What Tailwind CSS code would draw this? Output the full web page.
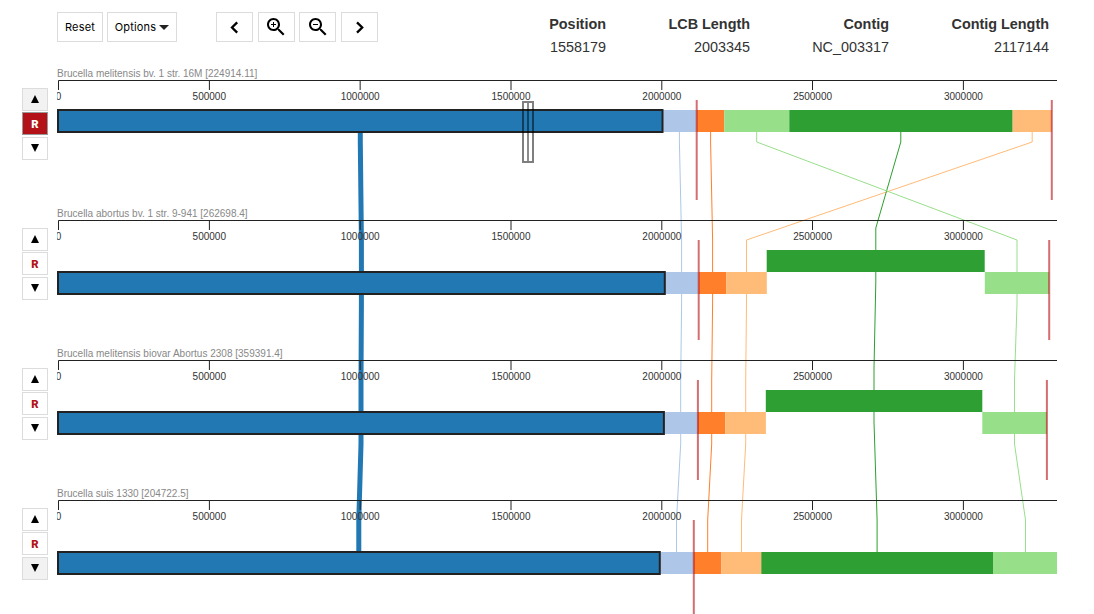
<!DOCTYPE html>
<html lang="en">
<head>
<meta charset="utf-8">
<title>Genome alignment viewer</title>
<script src="https://cdn.jsdelivr.net/npm/@tailwindcss/browser@4"></script>
</head>
<body class="bg-white w-[1094px] h-[614px] overflow-hidden font-['Inter',sans-serif] text-black">
<header class="flex h-[66px] pl-[57px] pr-[45px] justify-between">
  <div class="flex pt-3 h-[42px] text-[11px]">
    <button class="w-[46px] border border-[#dcdcdc] pt-px tracking-[0.15px]">Reset</button>
    <button class="ml-1 w-[70px] border border-[#dcdcdc] pt-px flex items-center justify-center gap-[3px] tracking-[0.15px]">Options
      <svg class="w-[10px] h-[5px]" viewBox="0 0 10 5"><path d="M0 0H10L5 5Z" fill="#222"/></svg></button>
    <button class="ml-[39px] w-[37px] border border-[#dcdcdc] flex items-center justify-center" aria-label="Left"><svg width="24" height="24" viewBox="0 0 24 24"><path d="M14.2 7.4L9 12.5L14.2 17.6" fill="none" stroke="#000" stroke-width="2.3"/></svg></button>
    <button class="ml-[5px] w-[37px] pr-px border border-[#dcdcdc] flex items-center justify-center" aria-label="Zoom in"><svg width="24" height="24" viewBox="0 0 24 24"><path d="M15.5 14h-.79l-.28-.27C15.41 12.59 16 11.11 16 9.5 16 5.91 13.09 3 9.5 3S3 5.91 3 9.5 5.91 16 9.5 16c1.61 0 3.09-.59 4.23-1.57l.27.28v.79l5 4.99L20.49 19l-4.99-5zm-6 0C7.01 14 5 11.99 5 9.5S7.01 5 9.5 5 14 7.01 14 9.5 11.99 14 9.5 14zm2.5-4h-2v2H9v-2H7V9h2V7h1v2h2v1z"/></svg></button>
    <button class="ml-1 w-[37px] border border-[#dcdcdc] flex items-center justify-center" aria-label="Zoom out"><svg width="24" height="24" viewBox="0 0 24 24"><path d="M15.5 14h-.79l-.28-.27C15.41 12.59 16 11.11 16 9.5 16 5.91 13.09 3 9.5 3S3 5.91 3 9.5 5.91 16 9.5 16c1.61 0 3.09-.59 4.23-1.57l.27.28v.79l5 4.99L20.49 19l-4.99-5zm-6 0C7.01 14 5 11.99 5 9.5S7.01 5 9.5 5 14 7.01 14 9.5 11.99 14 9.5 14zM7 9h5v1H7z"/></svg></button>
    <button class="ml-[5px] w-[37px] border border-[#dcdcdc] flex items-center justify-center" aria-label="Right"><svg width="24" height="24" viewBox="0 0 24 24"><path d="M9 7.4L14.2 12.5L9 17.6" fill="none" stroke="#000" stroke-width="2.3"/></svg></button>
  </div>
  <div class="grid grid-cols-[100px_144px_139px_160px] content-start pt-[13px] text-right text-[14.4px] leading-[23px] text-[#333] font-['Liberation_Sans',sans-serif]">
    <b>Position</b><b>LCB Length</b><b>Contig</b><b>Contig Length</b>
    <span>1558179</span><span>2003345</span><span>NC_003317</span><span>2117144</span>
  </div>
</header>
<main class="flex">
  <nav class="w-[57px] pl-[22px] pt-[22px] flex flex-col gap-[68px] shrink-0">
    <div class="h-[72px] w-[26px] grid grid-rows-[24px_25px_23px]">
      <button class="h-[23px] pb-px border border-[#dcdcdc] bg-[#f2f2f2] flex items-center justify-center"><svg width="8" height="8" viewBox="0 0 8 8"><path d="M0 8L4 0L8 8Z"/></svg></button>
      <button class="h-[23px] pt-px border border-[#999] bg-[#b31318] text-white font-extrabold text-[11px]">R</button>
      <button class="h-[23px] pb-px border border-[#dcdcdc] flex items-center justify-center"><svg width="8" height="8" viewBox="0 0 8 8"><path d="M0 0H8L4 8Z"/></svg></button>
    </div>
    <div class="h-[72px] w-[26px] grid grid-rows-[24px_25px_23px]">
      <button class="h-[23px] pb-px border border-[#dcdcdc] flex items-center justify-center"><svg width="8" height="8" viewBox="0 0 8 8"><path d="M0 8L4 0L8 8Z"/></svg></button>
      <button class="h-[23px] pt-px border border-[#dcdcdc] text-[#b31318] font-extrabold text-[11px]">R</button>
      <button class="h-[23px] pb-px border border-[#dcdcdc] flex items-center justify-center"><svg width="8" height="8" viewBox="0 0 8 8"><path d="M0 0H8L4 8Z"/></svg></button>
    </div>
    <div class="h-[72px] w-[26px] grid grid-rows-[24px_25px_23px]">
      <button class="h-[23px] pb-px border border-[#dcdcdc] flex items-center justify-center"><svg width="8" height="8" viewBox="0 0 8 8"><path d="M0 8L4 0L8 8Z"/></svg></button>
      <button class="h-[23px] pt-px border border-[#dcdcdc] text-[#b31318] font-extrabold text-[11px]">R</button>
      <button class="h-[23px] pb-px border border-[#dcdcdc] flex items-center justify-center"><svg width="8" height="8" viewBox="0 0 8 8"><path d="M0 0H8L4 8Z"/></svg></button>
    </div>
    <div class="h-[72px] w-[26px] grid grid-rows-[24px_25px_23px]">
      <button class="h-[23px] pb-px border border-[#dcdcdc] flex items-center justify-center"><svg width="8" height="8" viewBox="0 0 8 8"><path d="M0 8L4 0L8 8Z"/></svg></button>
      <button class="h-[23px] pt-px border border-[#dcdcdc] text-[#b31318] font-extrabold text-[11px]">R</button>
      <button class="h-[23px] pb-px border border-[#dcdcdc] bg-[#f2f2f2] flex items-center justify-center"><svg width="8" height="8" viewBox="0 0 8 8"><path d="M0 0H8L4 8Z"/></svg></button>
    </div>
  </nav>
  <svg class="block shrink-0 font-['Liberation_Sans',sans-serif]" width="1000" height="548" viewBox="57 66 1000 548">
    <defs>
      <g id="axis">
        <path d="M58.5 90V80.5H1057M209.4 80.5V90M360.15 80.5V90M511 80.5V90M661.8 80.5V90M812.5 80.5V90M963.4 80.5V90" fill="none" stroke="#222"/>
        <g font-size="10" text-anchor="middle" fill="#333">
          <text x="58.5" y="100">0</text><text x="209.3" y="100">500000</text><text x="360.2" y="100">1000000</text><text x="511" y="100">1500000</text><text x="661.8" y="100">2000000</text><text x="812.6" y="100">2500000</text><text x="963.4" y="100">3000000</text>
        </g>
      </g>
    </defs>
    <!-- connectors between homologous blocks -->
    <g fill="none" stroke-width="1">
      <path stroke="#2278b3" stroke-width="5" d="M360.3 132V142L361.4 240V304L361 380V444L358.8 520V552"/>
      <path stroke="#aec7e8" d="M679.4 132V142L681.6 240V304L680.7 380V444L676.5 520V552"/>
      <path stroke="#ff7f2a" d="M710.6 132V142L712.6 240V304L711.7 380V444L707.7 520V552"/>
      <path stroke="#ffbb78" d="M1032.2 132V142L746.5 240V304L745.7 380V444L741.5 520V552"/>
      <path stroke="#2ca02c" d="M900.8 132V142L875.8 228V282L874 368V422L877.1 520V552"/>
      <path stroke="#98df8a" d="M756.7 132V142L1017 240V304L1014.5 380V444L1025.5 520V552"/>
    </g>
    <use href="#axis"/><use href="#axis" y="140"/><use href="#axis" y="280"/><use href="#axis" y="420"/>
    <g font-size="10" fill="#888">
      <text x="57" y="77" textLength="200.3">Brucella melitensis bv. 1 str. 16M [224914.11]</text>
      <text x="57" y="217" textLength="190.6">Brucella abortus bv. 1 str. 9-941 [262698.4]</text>
      <text x="57" y="357" textLength="225.6">Brucella melitensis biovar Abortus 2308 [359391.4]</text>
      <text x="57" y="497" textLength="131.5">Brucella suis 1330 [204722.5]</text>
    </g>
    <g fill="#aec7e8">
      <rect x="662.5" y="110" width="34.2" height="22"/><rect x="665" y="272" width="33.7" height="22"/><rect x="664.3" y="412" width="33.6" height="22"/><rect x="660.4" y="552" width="33.4" height="22"/>
    </g>
    <g fill="#ff7f2a">
      <rect x="696.7" y="110" width="27.6" height="22"/><rect x="698.7" y="272" width="27.5" height="22"/><rect x="697.9" y="412" width="27.4" height="22"/><rect x="693.8" y="552" width="27.6" height="22"/>
    </g>
    <g fill="#ffbb78">
      <rect x="1012.4" y="110" width="39.5" height="22"/><rect x="726.2" y="272" width="40.6" height="22"/><rect x="725.3" y="412" width="40.6" height="22"/><rect x="721.4" y="552" width="40" height="22"/>
    </g>
    <g fill="#98df8a">
      <rect x="724.3" y="110" width="65" height="22"/><rect x="984.8" y="272" width="64.4" height="22"/><rect x="982.3" y="412" width="64.6" height="22"/><rect x="993" y="552" width="65" height="22"/>
    </g>
    <g fill="#2e9f33">
      <rect x="789.3" y="110" width="223.1" height="22"/><rect x="766.7" y="250" width="218" height="22"/><rect x="765.8" y="390" width="216.5" height="22"/><rect x="761.3" y="552" width="231.7" height="22"/>
    </g>
    <g fill="#2278b3" stroke="#222" stroke-width="2">
      <rect x="58" y="110" width="604.5" height="22"/><rect x="58" y="272" width="606.8" height="22"/><rect x="58" y="412" width="605.9" height="22"/><rect x="58" y="552" width="601.8" height="22"/>
    </g>
    <!-- contig boundaries -->
    <path d="M696.7 100V200M1051.8 100V200M698.7 240V340M1049.2 240V340M697.9 380V480M1046.9 380V480M693.8 520V620" stroke="#b80e14" stroke-opacity="0.6" stroke-width="2" fill="none"/>
    <!-- cursor -->
    <g fill="none" stroke="#000" stroke-opacity="0.5" stroke-width="2"><rect x="523" y="102" width="10" height="60"/><path d="M528 103V161" stroke-opacity="0.45"/></g>
  </svg>
</main>
</body>
</html>
